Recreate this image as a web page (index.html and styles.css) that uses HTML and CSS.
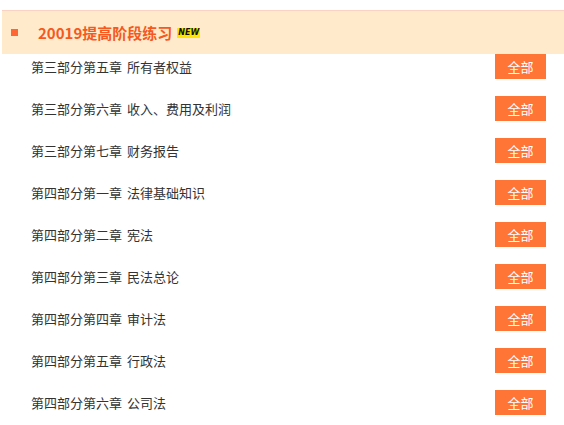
FILE: index.html
```html
<!DOCTYPE html>
<html lang="zh-CN">

<head>
    <meta charset="utf-8">
    <title>2019提高阶段练习</title>
    <link rel="stylesheet" href="styles.css">
</head>

<body>
    <div class="wrap">
        <div class="stage-head">
            <span class="dot"></span>
            <h2>20019提高阶段练习</h2>
            <span class="new">NEW</span>
        </div>

        <ul class="chapters">
            <li><span>第三部分第五章 所有者权益</span><a class="all" href="#">全部</a></li>
            <li><span>第三部分第六章 收入、费用及利润</span><a class="all" href="#">全部</a></li>
            <li><span>第三部分第七章 财务报告</span><a class="all" href="#">全部</a></li>
            <li><span>第四部分第一章 法律基础知识</span><a class="all" href="#">全部</a></li>
            <li><span>第四部分第二章 宪法</span><a class="all" href="#">全部</a></li>
            <li><span>第四部分第三章 民法总论</span><a class="all" href="#">全部</a></li>
            <li><span>第四部分第四章 审计法</span><a class="all" href="#">全部</a></li>
            <li><span>第四部分第五章 行政法</span><a class="all" href="#">全部</a></li>
            <li><span>第四部分第六章 公司法</span><a class="all" href="#">全部</a></li>
        </ul>
    </div>
</body>
</html>
```

FILE: styles.css
```css
html,
body {
    margin: 0;
}

body {
    font-family: "Noto Sans CJK SC", "Noto Sans", sans-serif;
    background: #fff;
    color: #333;
}

.wrap {
    padding: 10px 0 0 2px;
}

.stage-head {
    display: flex;
    align-items: center;
    height: 43px;
    background: #ffebcb;
    border-top: 1px solid #fbd2c2;
}

.dot {
    width: 7px;
    height: 7px;
    margin: 0 20px 0 9px;
    background: #ff6633;
}

.stage-head h2 {
    margin: 0;
    font-size: 15px;
    font-weight: bold;
    color: #f5591f;
}

.new {
    margin-left: 5px;
    padding: 0 1px;
    font-family: "DejaVu Sans", sans-serif;
    font-size: 8px;
    font-weight: bold;
    font-style: italic;
    line-height: 10px;
    color: #111;
    background: #ffe600;
}

.chapters {
    list-style: none;
    margin: 0;
    padding: 0;
}

.chapters li {
    display: flex;
    align-items: center;
    justify-content: space-between;
    height: 25px;
    margin-bottom: 17px;
    padding: 0 18px 0 29px;
    font-size: 13px;
    word-spacing: 2px;
}

.all {
    width: 51px;
    height: 25px;
    line-height: 25px;
    text-align: center;
    color: #fff;
    text-decoration: none;
    background: #ff7535;
}
```
